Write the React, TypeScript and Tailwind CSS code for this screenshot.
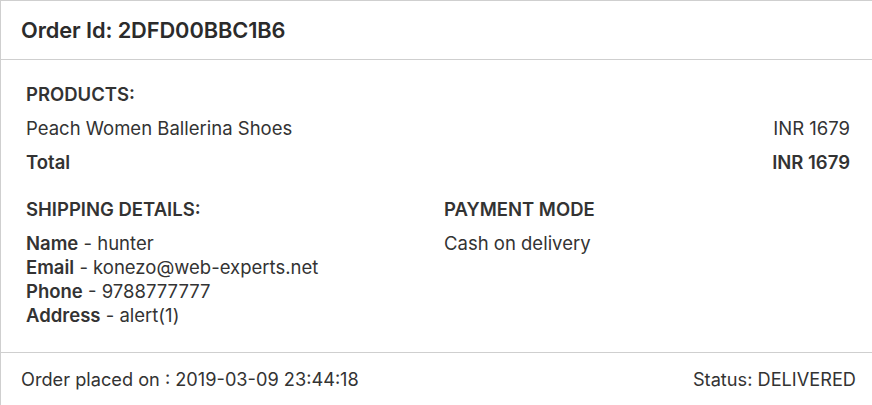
export default function App() {
  return (
    <div className="w-[872px] h-[405px] overflow-hidden bg-white text-[#333] font-['Inter','Liberation_Sans',sans-serif]">
      <div className="w-[880px] border border-[#cfcfcf]">
        <div className="h-[59px] flex items-center px-5 border-b border-[#cfcfcf]">
          <h1 className="text-[21.8px] font-semibold text-[#2b2b2b] tracking-[-0.1px]">Order Id: 2DFD00BBC1B6</h1>
        </div>
        <div className="pl-[25px] pr-[29px] pt-[22px] pb-[25px] text-[18.5px] leading-[24px]">
          <div className="font-semibold h-[24px]">PRODUCTS:</div>
          <div className="flex justify-between mt-[10px]">
            <span>Peach Women Ballerina Shoes</span>
            <span>INR 1679</span>
          </div>
          <div className="flex justify-between mt-[10px] font-semibold">
            <span>Total</span>
            <span>INR 1679</span>
          </div>
          <div className="flex mt-[23px]">
            <div className="w-[418px]">
              <div className="font-semibold">SHIPPING DETAILS:</div>
              <div className="mt-[10px]"><b className="font-semibold">Name</b> - hunter</div>
              <div><b className="font-semibold">Email</b> - konezo@web-experts.net</div>
              <div><b className="font-semibold">Phone</b> - 9788777777</div>
              <div><b className="font-semibold">Address</b> - alert(1)</div>
            </div>
            <div>
              <div className="font-semibold">PAYMENT MODE</div>
              <div className="mt-[10px]">Cash on delivery</div>
            </div>
          </div>
        </div>
        <div className="border-t border-[#cfcfcf] pl-5 pr-[23px] py-[14px] flex justify-between text-[18.2px] leading-[24px]">
          <span>Order placed on : 2019-03-09 23:44:18</span>
          <span>Status: DELIVERED</span>
        </div>
      </div>
    </div>
  );
}
